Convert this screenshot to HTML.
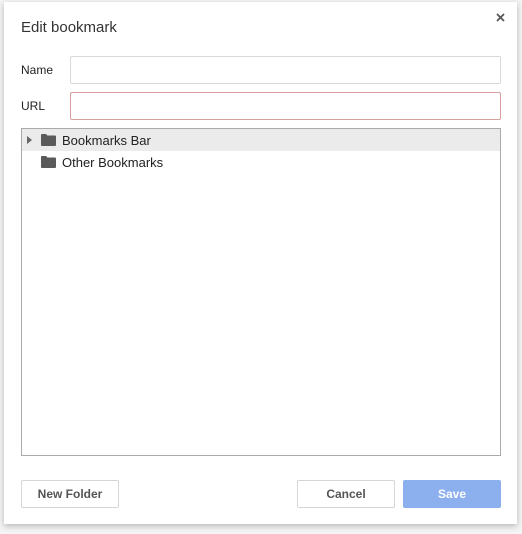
<!DOCTYPE html><html><head><style>
body{margin:0;width:522px;height:534px;background:#f4f4f4;font-family:"Liberation Sans",sans-serif;position:relative;overflow:hidden}
.d{position:absolute;left:4px;top:2px;width:513px;height:522px;background:#fff;box-shadow:0 2px 6px rgba(0,0,0,.25)}
.a{position:absolute}
.t{left:21px;top:19px;font-size:15px;color:#333}
.l{font-size:12px;color:#222}
.in{border:1px solid #d9d9d9;border-radius:2px;box-sizing:border-box}
.b{border:1px solid #d6d6d6;border-radius:2px;box-sizing:border-box;font-size:12px;color:#555;text-align:center;line-height:26px;font-weight:bold}
.r{font-size:13px;color:#222}
</style></head><body>
<div class="d"></div>
<div class="a t">Edit bookmark</div>
<svg class="a" style="left:496px;top:13px" width="9" height="9"><path d="M1 1L8 8M8 1L1 8" stroke="#555" stroke-width="1.8"/></svg>
<div class="a l" style="left:21px;top:63px">Name</div>
<div class="a in" style="left:70px;top:56px;width:431px;height:28px"></div>
<div class="a l" style="left:21px;top:99px">URL</div>
<div class="a in" style="left:70px;top:92px;width:431px;height:28px;border-color:#d9a0a0"></div>
<div class="a" style="left:21px;top:128px;width:480px;height:328px;border:1px solid #aaa;box-sizing:border-box"></div>
<div class="a" style="left:22px;top:129px;width:478px;height:22px;background:#ebebeb"></div>
<div class="a" style="left:27px;top:136px;width:0;height:0;border-left:5px solid #666;border-top:4px solid transparent;border-bottom:4px solid transparent"></div>
<svg class="a" style="left:41px;top:134px" width="15" height="12"><path d="M0 1Q0 0 1 0H5L6.5 1.5H14Q15 1.5 15 2.5V11Q15 12 14 12H1Q0 12 0 11Z" fill="#5a5a5a"/></svg>
<div class="a r" style="left:62px;top:133px">Bookmarks Bar</div>
<svg class="a" style="left:41px;top:156px" width="15" height="12"><path d="M0 1Q0 0 1 0H5L6.5 1.5H14Q15 1.5 15 2.5V11Q15 12 14 12H1Q0 12 0 11Z" fill="#5a5a5a"/></svg>
<div class="a r" style="left:62px;top:155px">Other Bookmarks</div>
<div class="a b" style="left:21px;top:480px;width:98px;height:28px">New Folder</div>
<div class="a b" style="left:297px;top:480px;width:98px;height:28px">Cancel</div>
<div class="a b" style="left:403px;top:480px;width:98px;height:28px;background:#8cb0ee;border-color:#8cb0ee;color:#fff">Save</div>
</body></html>
